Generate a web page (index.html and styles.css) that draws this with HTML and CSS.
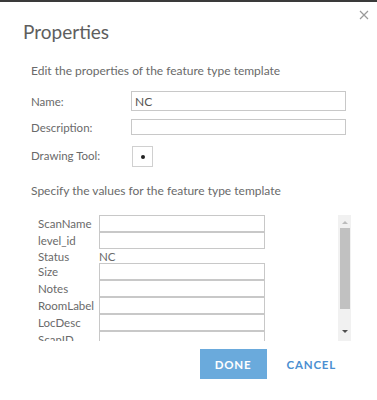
FILE: index.html
```html
<!DOCTYPE html>
<html lang="en">
<head>
  <meta charset="UTF-8">
  <meta name="viewport" content="width=device-width, initial-scale=1.0">
  <title>Properties</title>
  <link rel="stylesheet" href="styles.css">
</head>
<body>
  <div class="topbar"></div>
  <div class="dialog">
    <div class="header">
      <h1>Properties</h1>
      <svg class="close" width="10" height="10" viewBox="0 0 10 10">
        <path d="M1 1 L9 9 M9 1 L1 9" stroke="#9a9a9a" stroke-width="1.2" fill="none"/>
      </svg>
    </div>

    <p class="intro">Edit the properties of the feature type template</p>

    <div class="form">
      <label>Name:</label>
      <input type="text" class="name-input" value="NC">

      <label>Description:</label>
      <input type="text" class="desc-input">

      <label>Drawing Tool:</label>
      <div class="tool-box"><span class="dot"></span></div>
    </div>

    <p class="intro specify">Specify the values for the feature type template</p>

    <div class="attr-area">
      <div class="attr-list">
        <div class="attr-row"><span class="attr-label">ScanName</span><input type="text"></div>
        <div class="attr-row"><span class="attr-label">level_id</span><input type="text"></div>
        <div class="attr-row static"><span class="attr-label">Status</span><span class="attr-value">NC</span></div>
        <div class="attr-row"><span class="attr-label">Size</span><input type="text"></div>
        <div class="attr-row"><span class="attr-label">Notes</span><input type="text"></div>
        <div class="attr-row"><span class="attr-label">RoomLabel</span><input type="text"></div>
        <div class="attr-row"><span class="attr-label">LocDesc</span><input type="text"></div>
        <div class="attr-row"><span class="attr-label">ScanID</span><input type="text"></div>
      </div>
      <div class="scrollbar">
        <span class="arrow up"></span>
        <div class="thumb"></div>
        <span class="arrow down"></span>
      </div>
    </div>

    <div class="footer">
      <button class="btn-done">DONE</button>
      <button class="btn-cancel">CANCEL</button>
    </div>
  </div>
</body>
</html>
```

FILE: styles.css
```css
body {
  margin: 0;
  padding: 0;
  background: #fff;
  font-family: Lato, "Open Sans", sans-serif;
  color: #6a6a6a;
}
.topbar {
  height: 2px;
  background: #3a3a3a;
}
.dialog {
  padding: 0 31px 0 23px;
}
.header {
  display: flex;
  justify-content: space-between;
  align-items: flex-start;
}
h1 {
  margin: 18px 0 0 0;
  font-size: 19px;
  font-weight: 400;
  color: #5e5e5e;
  line-height: 24px;
}
.close {
  margin: 8px -23px 0 0;
}
.intro {
  margin: 20px 0 0 8px;
  font-size: 12px;
  line-height: 14px;
}
.form {
  display: grid;
  grid-template-columns: 100px 1fr;
  align-items: center;
  row-gap: 8px;
  margin: 13px 0 0 8px;
}
.form label {
  font-size: 11.5px;
}
.form input {
  box-sizing: border-box;
  margin: 0;
  padding: 0 3px;
  border: 1px solid #c8c8c8;
  font-family: inherit;
  font-size: 12px;
  color: #555;
  outline: none;
}
.name-input {
  height: 20px;
}
.desc-input {
  height: 16px;
}
.tool-box {
  box-sizing: border-box;
  width: 21px;
  height: 21px;
  margin: 3px 0 0 1px;
  border: 1px solid #d0d0d0;
  display: flex;
  align-items: center;
  justify-content: center;
}
.dot {
  width: 4px;
  height: 4px;
  border-radius: 50%;
  background: #222;
}
.specify {
  margin-top: 17px;
}
.attr-area {
  display: flex;
  margin: 17px 0 0 15px;
  height: 126px;
}
.attr-list {
  flex: none;
  width: 227px;
  overflow: hidden;
}
.attr-row {
  display: flex;
  align-items: center;
  height: 17px;
}
.attr-row.static {
  height: 14px;
}
.attr-label {
  flex: none;
  width: 61px;
  font-size: 11.5px;
  white-space: nowrap;
}
.attr-value {
  font-size: 11.5px;
}
.attr-row input {
  flex: none;
  box-sizing: border-box;
  width: 166px;
  height: 17px;
  margin: 0;
  padding: 0;
  border: 1px solid #c8c8c8;
  outline: none;
}
.scrollbar {
  flex: none;
  margin-left: 73px;
  width: 13px;
  background: #f1f1f1;
  display: flex;
  flex-direction: column;
  align-items: center;
}
.thumb {
  width: 10px;
  height: 81px;
  background: #c1c1c1;
  margin: 4px 0 0 0;
}
.arrow {
  width: 0;
  height: 0;
  border-left: 3px solid transparent;
  border-right: 3px solid transparent;
}
.arrow.up {
  margin-top: 6px;
  border-bottom: 3px solid #bbb;
}
.arrow.down {
  margin-top: 21px;
  border-top: 3px solid #505050;
}
.footer {
  display: flex;
  justify-content: flex-end;
  align-items: center;
  margin: 8px 0 0 0;
}
.footer button {
  font-family: inherit;
  font-size: 11.5px;
  font-weight: 700;
  letter-spacing: 0.8px;
  border: none;
  padding: 0;
  cursor: pointer;
}
.btn-done {
  width: 67px;
  height: 30px;
  background: #6aaadc;
  color: #fff;
}
.btn-cancel {
  margin-left: 10px;
  padding: 0 10px !important;
  height: 30px;
  background: none;
  color: #4b8fd1;
}
```
